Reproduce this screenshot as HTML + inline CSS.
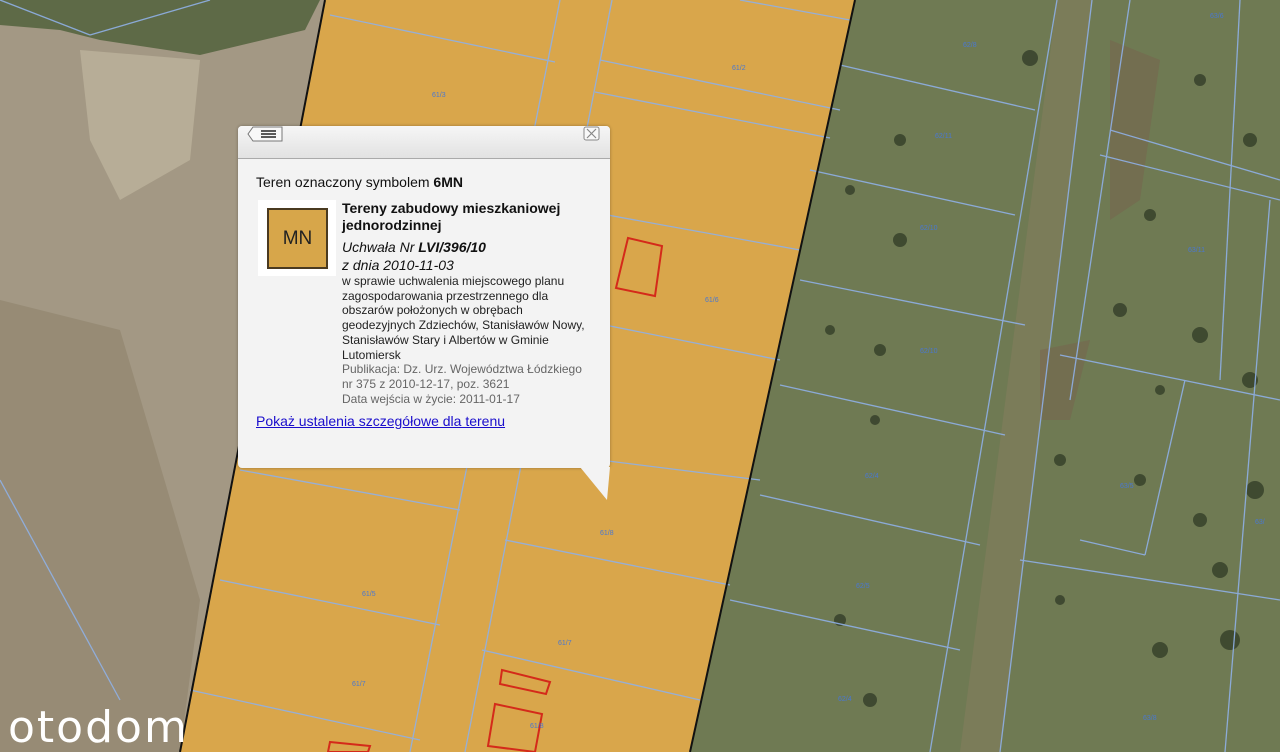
<!DOCTYPE html>
<html><head><meta charset="utf-8"><style>
body{margin:0;width:1280px;height:752px;overflow:hidden;position:relative;font-family:"Liberation Sans",Arial,sans-serif;}
svg.map{position:absolute;left:0;top:0}
.pop{position:absolute;left:238px;top:126px;width:372px;height:342px;background:#f3f3f3;border-radius:4px;box-shadow:0 0 3px rgba(0,0,0,.3)}
.bar{height:32px;background:linear-gradient(#f6f6f6,#e2e2e2);border-bottom:1px solid #aaa;border-radius:4px 4px 0 0}
.t{position:absolute;font-size:14px;color:#111}
.small{position:absolute;font-size:12px;line-height:14.7px;color:#222}
.logo{position:absolute;left:8px;top:702px;font-size:44px;color:#fff;letter-spacing:2px;font-family:"DejaVu Sans","Liberation Sans",sans-serif}
</style></head><body>
<svg class="map" width="1280" height="752">
<rect width="1280" height="752" fill="#a39884"/>
<polygon points="0,0 320,0 305,30 200,55 100,40 60,30 0,25" fill="#5e6a47"/>
<polygon points="80,50 200,60 190,160 120,200 90,140" fill="#b7ad97"/>
<polygon points="0,300 120,330 200,600 180,752 0,752" fill="#978b75"/>
<polygon points="855,0 1280,0 1280,752 690,752" fill="#6f7a53"/>
<polygon points="1057,0 1092,0 1000,752 960,752" fill="#7b7c59"/>
<polygon points="1110,40 1160,60 1140,200 1110,220" fill="#7a5d4e" opacity=".4"/>
<polygon points="1040,350 1090,340 1070,420 1040,420" fill="#7a5d4e" opacity=".4"/>
<g fill="#2f3a25" opacity=".75">
<circle cx="1030" cy="58" r="8"/><circle cx="1200" cy="80" r="6"/><circle cx="1250" cy="140" r="7"/><circle cx="1150" cy="215" r="6"/><circle cx="1120" cy="310" r="7"/><circle cx="1200" cy="335" r="8"/><circle cx="1160" cy="390" r="5"/><circle cx="1250" cy="380" r="8"/><circle cx="1140" cy="480" r="6"/><circle cx="1255" cy="490" r="9"/><circle cx="1060" cy="460" r="6"/><circle cx="1200" cy="520" r="7"/><circle cx="1220" cy="570" r="8"/><circle cx="1160" cy="650" r="8"/><circle cx="1230" cy="640" r="10"/><circle cx="1060" cy="600" r="5"/><circle cx="900" cy="240" r="7"/><circle cx="850" cy="190" r="5"/><circle cx="830" cy="330" r="5"/><circle cx="880" cy="350" r="6"/><circle cx="875" cy="420" r="5"/><circle cx="840" cy="620" r="6"/><circle cx="870" cy="700" r="7"/><circle cx="900" cy="140" r="6"/></g>
<polygon points="855,0 325,0 180,752 690,752" fill="#d9a64b"/>
<g stroke="#8fb0e6" stroke-width="1.3" fill="none" opacity=".9">
<line x1="560" y1="0" x2="410" y2="752"/><line x1="612" y1="0" x2="465" y2="752"/>
<line x1="330" y1="15" x2="555" y2="62"/><line x1="600" y1="60" x2="840" y2="110"/><line x1="595" y1="92" x2="830" y2="138"/>
<line x1="290" y1="180" x2="540" y2="228"/><line x1="580" y1="210" x2="800" y2="250"/>
<line x1="580" y1="320" x2="780" y2="360"/><line x1="520" y1="450" x2="760" y2="480"/>
<line x1="240" y1="470" x2="460" y2="510"/><line x1="505" y1="540" x2="730" y2="585"/>
<line x1="220" y1="580" x2="440" y2="625"/><line x1="482" y1="650" x2="700" y2="700"/>
<line x1="190" y1="690" x2="420" y2="740"/>
<line x1="740" y1="0" x2="850" y2="20"/>
<line x1="1057" y1="0" x2="930" y2="752"/><line x1="1092" y1="0" x2="1000" y2="752"/>
<line x1="1130" y1="0" x2="1070" y2="400"/>
<line x1="1240" y1="0" x2="1220" y2="380"/>
<line x1="840" y1="65" x2="1035" y2="110"/>
<line x1="810" y1="170" x2="1015" y2="215"/><line x1="800" y1="280" x2="1025" y2="325"/>
<line x1="780" y1="385" x2="1005" y2="435"/><line x1="760" y1="495" x2="980" y2="545"/>
<line x1="730" y1="600" x2="960" y2="650"/><line x1="1110" y1="130" x2="1280" y2="180"/>
<line x1="1100" y1="155" x2="1280" y2="200"/><line x1="1060" y1="355" x2="1280" y2="400"/>
<line x1="1020" y1="560" x2="1280" y2="600"/><line x1="1185" y1="380" x2="1145" y2="555"/>
<line x1="1080" y1="540" x2="1145" y2="555"/><line x1="1270" y1="200" x2="1225" y2="752"/>
<line x1="0" y1="480" x2="120" y2="700"/><line x1="0" y1="0" x2="90" y2="35"/><line x1="90" y1="35" x2="210" y2="0"/>
</g>
<line x1="325" y1="0" x2="180" y2="752" stroke="#111" stroke-width="2"/>
<line x1="855" y1="0" x2="690" y2="752" stroke="#111" stroke-width="2"/>
<g stroke="#d42a1a" stroke-width="2" fill="none">
<polygon points="628,238 662,246 655,296 616,288"/>
<polygon points="502,670 550,682 546,694 500,684"/>
<polygon points="495,704 542,714 535,752 488,746"/>
<polygon points="330,742 370,746 368,752 328,752"/>
</g>
<g fill="#4a78d0" font-size="7" font-family="Liberation Sans">
<text x="432" y="97">61/3</text><text x="732" y="70">61/2</text><text x="705" y="302">61/6</text><text x="600" y="535">61/8</text><text x="558" y="645">61/7</text><text x="362" y="596">61/5</text><text x="352" y="686">61/7</text><text x="530" y="728">61/8</text>
<text x="963" y="47">62/8</text><text x="1210" y="18">63/6</text><text x="935" y="138">62/11</text><text x="1188" y="252">63/11</text><text x="920" y="230">62/10</text><text x="920" y="353">62/10</text><text x="865" y="478">62/4</text><text x="856" y="588">62/5</text><text x="838" y="701">62/4</text><text x="1120" y="488">63/5</text><text x="1255" y="524">63/</text><text x="1143" y="720">63/8</text>
</g>
</svg>
<div class="pop">
<div class="bar"></div>
<svg style="position:absolute;left:9px;top:0" width="38" height="16"><path d="M6 1H35V15H6L1 8Z" fill="#f8f8f8" stroke="#777"/><g stroke="#333" stroke-width="1.6"><line x1="14" y1="5" x2="29" y2="5"/><line x1="14" y1="8" x2="29" y2="8"/><line x1="14" y1="11" x2="29" y2="11"/></g></svg>
<svg style="position:absolute;left:345px;top:0" width="18" height="16"><rect x="1" y="1" width="15" height="13" fill="#f8f8f8" stroke="#888" rx="2"/><path d="M4 3L13 12M13 3L4 12" stroke="#888" stroke-width="1.2"/></svg>
<div class="t" style="left:18px;top:48px">Teren oznaczony symbolem <b>6MN</b></div>
<div style="position:absolute;left:20px;top:74px;width:78px;height:76px;background:#fff"></div>
<div style="position:absolute;left:29px;top:82px;width:57px;height:57px;background:#d7a64a;border:2px solid #4a3a20;font-size:19px;line-height:57px;text-align:center;color:#222">MN</div>
<div class="t" style="left:104px;top:74px;font-weight:bold;line-height:17px">Tereny zabudowy mieszkaniowej<br>jednorodzinnej</div>
<div class="t" style="left:104px;top:112px;font-style:italic;line-height:18px">Uchwała Nr <b>LVI/396/10</b><br>z dnia 2010-11-03</div>
<div class="small" style="left:104px;top:148px">w sprawie uchwalenia miejscowego planu<br>zagospodarowania przestrzennego dla<br>obszarów położonych w obrębach<br>geodezyjnych Zdziechów, Stanisławów Nowy,<br>Stanisławów Stary i Albertów w Gminie<br>Lutomiersk<div style="color:#666">Publikacja: Dz. Urz. Województwa Łódzkiego<br>nr 375 z 2010-12-17, poz. 3621<br>Data wejścia w życie: 2011-01-17</div></div>
<div class="t" style="left:18px;top:287px;color:#1a0dcc;text-decoration:underline">Pokaż ustalenia szczegółowe dla terenu</div>
</div>
<svg style="position:absolute;left:580px;top:467px" width="30" height="34"><path d="M0 0H30V0L27 33Z" fill="#f3f3f3"/></svg>
<div class="logo">otodom</div>
</body></html>
